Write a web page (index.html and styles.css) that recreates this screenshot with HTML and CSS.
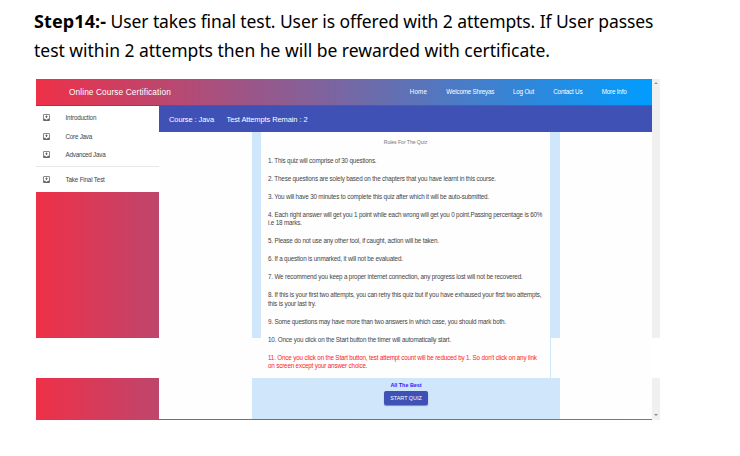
FILE: index.html
```html
<!DOCTYPE html>
<html lang="en">
<head>
<meta charset="utf-8">
<title>Online Course Certification</title>
<link rel="stylesheet" href="styles.css">
</head>
<body>
<svg width="0" height="0" class="defs"><symbol id="inbox" viewBox="0 0 24 24"><path fill="currentColor" fill-rule="evenodd" d="M5 3h14a2 2 0 0 1 2 2v14a2 2 0 0 1-2 2H5a2 2 0 0 1-2-2V5c0-1.100.9-2 2-2zm0 2v10h4a3 3 0 0 0 6 0h4V5zm3 5 4-4 4 4h-2.500v3h-3v-3z"/></symbol></svg>
<p class="step"><span class="line first"><b>Step14:-</b> User takes final test. User is offered with 2 attempts. If User passes</span><br><span class="line second">test within 2 attempts then he will be rewarded with certificate.</span></p>
<div class="window">
  <div class="app">
    <header class="topbar">
      <div class="brand">Online Course Certification</div>
      <nav><a class="home">Home</a><a class="welcome">Welcome Shreyas</a><a class="logout">Log Out</a><a class="contact">Contact Us</a><a class="more">More Info</a></nav>
    </header>
    <div class="body">
      <aside>
        <ul class="menu">
          <li><svg><use href="#inbox"/></svg>Introduction</li>
          <li><svg><use href="#inbox"/></svg>Core Java</li>
          <li><svg><use href="#inbox"/></svg>Advanced Java</li>
        </ul>
        <ul class="menu final"><li><svg><use href="#inbox"/></svg>Take Final Test</li></ul>
        <div class="fill"></div>
        <div class="gap"></div>
      </aside>
      <main>
        <div class="course"><span class="name">Course : Java</span><span class="attempts">Test Attempts Remain : 2</span></div>
        <div class="quiz">
          <section class="rules">
            <h2>Rules For The Quiz</h2>
            <p>1. This quiz will comprise of 30 questions.</p>
            <p>2. These questions are solely based on the chapters that you have learnt in this course.</p>
            <p>3. You will have 30 minutes to complete this quiz after which it will be auto-submitted.</p>
            <p>4. Each right answer will get you 1 point while each wrong will get you 0 point.Passing percentage is 60%<br>i.e 18 marks.</p>
            <p>5. Please do not use any other tool, if caught, action will be taken.</p>
            <p>6. If a question is unmarked, it will not be evaluated.</p>
            <p>7. We recommend you keep a proper internet connection, any progress lost will not be recovered.</p>
            <p>8. If this is your first two attempts, you can retry this quiz but if you have exhaused your first two attempts,<br>this is your last try.</p>
            <p>9. Some questions may have more than two answers in which case, you should mark both.</p>
            <p>10. Once you click on the Start button the timer will automatically start.</p>
            <p class="warn">11. Once you click on the Start button, test attempt count will be reduced by 1. So don't click on any link<br>on screen except your answer choice.</p>
          </section>
          <div class="start"><div class="best">All The Best</div><button>START QUIZ</button></div>
        </div>
      </main>
    </div>
  </div>
  <div class="scroll"><i class="up"></i><div class="gap"></div><i class="down"></i></div>
</div>
</body>
</html>
```
FILE: styles.css
```css
* { box-sizing: border-box; }
body { margin: 0; height: 456px; overflow: hidden; background: #fff; font-family: "Liberation Sans", Arial, sans-serif; }
.defs { display: block; }
.step { margin: 0; padding: 7px 0 0 34px; height: 79px; font: 17.500px/29px "Noto Sans", sans-serif; color: #000; white-space: nowrap; }
.step b { font-size: 18px; letter-spacing: .1px; }
.first { letter-spacing: -0.090px; }
.second { letter-spacing: -0.020px; }
.window { display: flex; width: 624px; height: 341px; margin-left: 36px; }
.app { width: 616px; height: 341px; background: linear-gradient(90deg, #ee3048, #009dff); }
.topbar { display: flex; align-items: center; justify-content: space-between; height: 27px; padding: 0 25.500px 1px 33px; color: #fff; border-bottom: 1px solid rgba(50, 50, 110, .35); }
.brand { font-size: 8.300px; letter-spacing: .1px; }
nav { display: flex; gap: 19.300px; font-size: 6.300px; letter-spacing: -0.200px; white-space: nowrap; }
.home { letter-spacing: .1px; }
.welcome { margin-right: -0.700px; }
.body { display: flex; height: 314px; }
aside { width: 123px; display: flex; flex-direction: column; }
.menu { list-style: none; margin: 0; padding: 2.800px 0 0; background: #fff; height: 61px; border-bottom: 1px solid #e8e8e8; }
.menu.final { height: 25px; padding-top: 3px; border: 0; }
.menu li { display: flex; align-items: center; height: 18.300px; padding-left: 6px; gap: 14.500px; color: #444; font-size: 6.300px; letter-spacing: -0.240px; }
.menu li:first-child { letter-spacing: -0.180px; }
.menu svg { width: 9px; height: 9px; color: #666; }
.fill { height: 146px; }
.gap { height: 40px; background: #fff; }
main { width: 493px; height: 313px; background: #fefefe; }
.course { display: flex; align-items: center; gap: 12.500px; height: 26px; padding-left: 10px; background: #3f51b5; color: #fff; font-size: 7.500px; letter-spacing: -0.100px; }
.quiz { width: 308px; height: 287px; margin-left: 93px; background: linear-gradient(#d0e7fb 206px, #fefefe 206px, #fefefe 246px, #d0e7fb 246px); }
.rules { width: 290px; height: 246px; margin-left: 9px; padding: 5.500px 0 0 7px; background: #fefefe; border-right: 1px solid #d0e7fb; color: #444; font-size: 6.300px; letter-spacing: -0.178px; line-height: 8.200px; white-space: nowrap; }
.rules h2 { margin: 0 7px 11.100px 0; font-size: 5.200px; letter-spacing: -0.080px; line-height: 8px; font-weight: 400; text-align: center; color: #777; }
.rules p { margin: 0 0 9.900px; }
.rules .warn { color: #f22; }
.start { display: flex; flex-direction: column; align-items: center; padding-top: 3px; }
.best { font-size: 5.400px; line-height: 9px; font-weight: 700; color: #22f; }
button { width: 44px; height: 14px; margin-top: 1px; padding: 0; border: 0; border-radius: 2px; background: #3f51b5; box-shadow: 0 1px 1px #7789b4; color: #fff; font: 5.400px "Liberation Sans", sans-serif; }
.scroll { width: 8px; height: 341px; display: flex; flex-direction: column; align-items: center; background: #f0f0f0; }
.scroll .gap { width: 8px; flex: none; margin-top: 254px; }
.up { margin-top: 3px; border: 2px solid transparent; border-top: 0; border-bottom: 2px solid #999; }
.down { margin-top: 36px; border: 2px solid transparent; border-bottom: 0; border-top: 2px solid #888; }
```
